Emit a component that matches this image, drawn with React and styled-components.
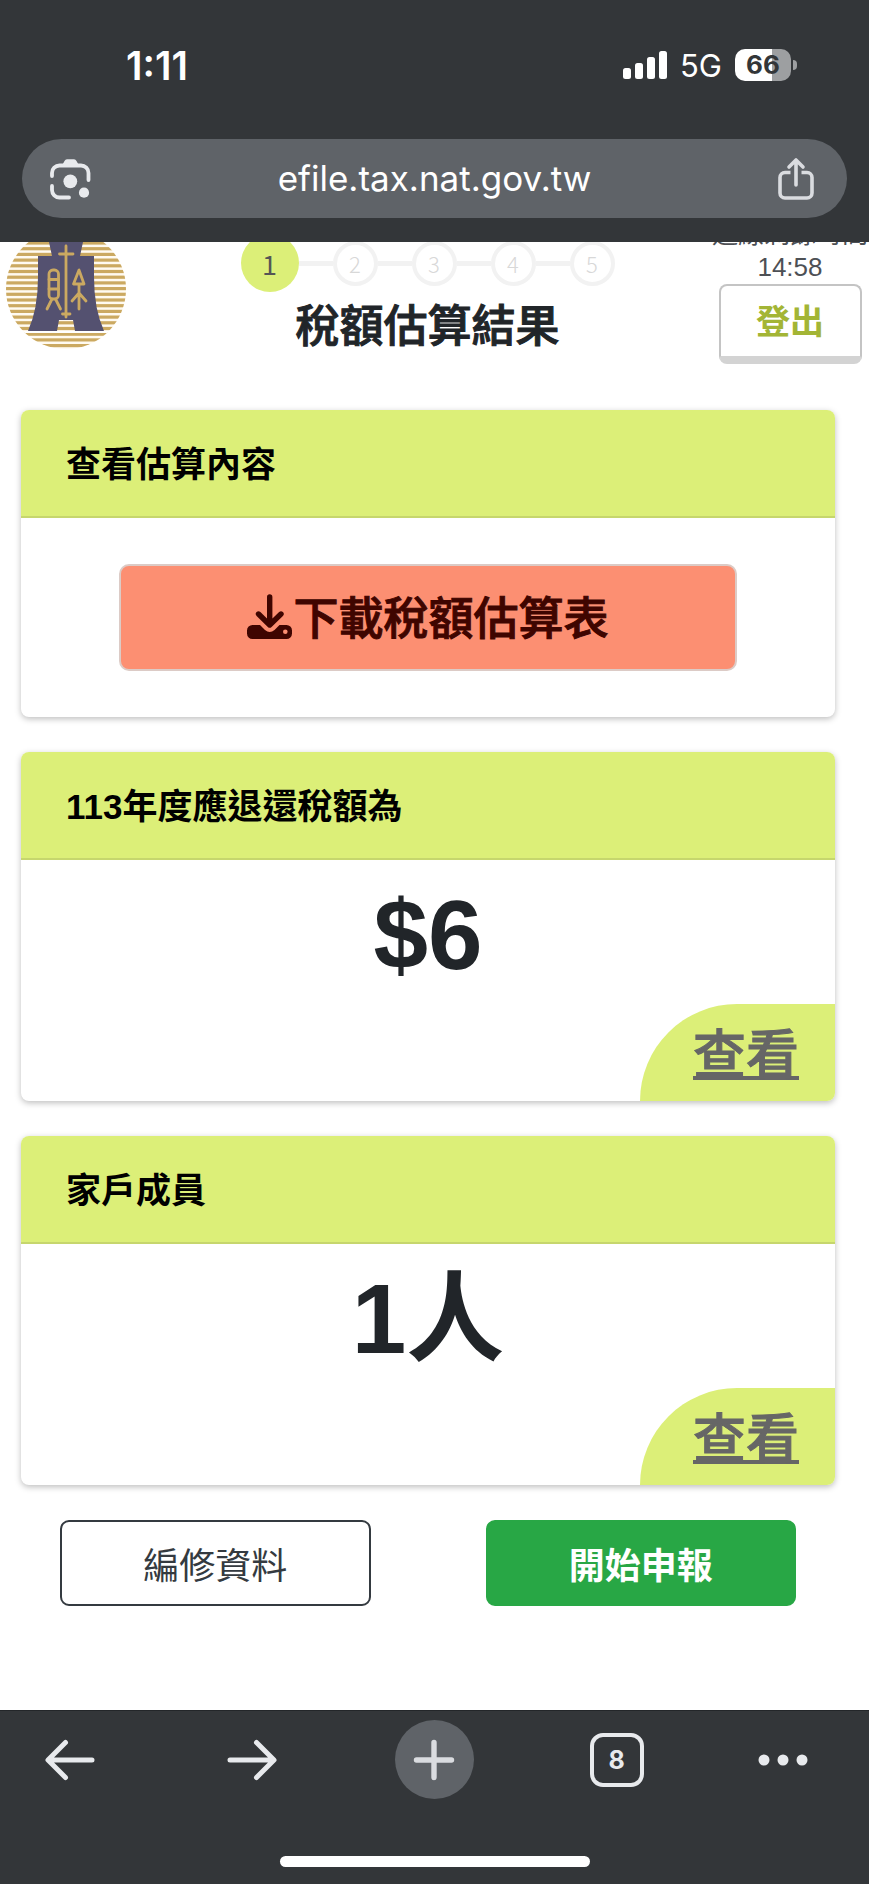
import React from "react";
import styled, { createGlobalStyle } from "styled-components";

const GlobalStyle = createGlobalStyle`
  *, *::before, *::after { box-sizing: border-box; }
  body {
    margin: 0;
    color: #212529;
    background: #fff;
    font-family: "Liberation Sans", "Noto Sans CJK TC", sans-serif;
  }
  button, input { font-family: inherit; }
`;

const Screen = styled.div`
  display: flex;
  flex-direction: column;
  min-height: 100vh;
`;

/* ---------- top browser chrome ---------- */

const TopChrome = styled.div`
  background: #333639;
  padding: 41px 22px 24px;
  font-family: Inter, sans-serif;
`;

const StatusBar = styled.div`
  display: flex;
  align-items: center;
  justify-content: space-between;
  height: 48px;
  margin-bottom: 50px;
  padding: 0 50px 0 104px;
  color: #fff;
`;

const Clock = styled.time`
  font-size: 39px;
  font-weight: 600;
`;

const StatusIcons = styled.div`
  display: flex;
  align-items: center;
  gap: 13px;
`;

const Network = styled.span`
  font-size: 31px;
`;

const BatteryWrapper = styled.div`
  display: flex;
  align-items: center;
  gap: 2px;
`;

const Battery = styled.div`
  width: 56px;
  height: 32px;
  border-radius: 10px;
  background: linear-gradient(to right, #fff ${(props) => props.$level}%, #9d9fa1 ${(props) => props.$level}%);
  color: #333639;
  font-size: 26px;
  font-weight: 700;
  line-height: 32px;
  text-align: center;
`;

const BatteryTip = styled.div`
  width: 4px;
  height: 10px;
  border-radius: 0 4px 4px 0;
  background: #9d9fa1;
`;

const AddressBar = styled.div`
  display: flex;
  align-items: center;
  height: 79px;
  padding: 0 33px 0 28px;
  border-radius: 40px;
  background: #5f6368;
`;

const Address = styled.input`
  flex: 1;
  min-width: 0;
  border: 0;
  padding: 0 0 2px;
  background: transparent;
  color: #fff;
  font-size: 35px;
  line-height: 44px;
  text-align: center;
  outline: none;
`;

const IconButton = styled.button`
  display: flex;
  align-items: center;
  justify-content: center;
  border: 0;
  padding: 0;
  background: transparent;
  color: #e8eaed;
`;

/* ---------- web page ---------- */

const Viewport = styled.main`
  flex: 1;
  overflow: hidden;
`;

/* the page is scrolled a little, so the header slides under the address bar */
const PageHeader = styled.header`
  display: grid;
  grid-template-columns: 144px 1fr 158px;
  margin-top: -28px;
`;

const LogoLink = styled.a`
  padding: 15px 6px 0;
`;

const HeaderCenter = styled.div`
  display: flex;
  flex-direction: column;
  align-items: center;
  padding-top: 20px;
`;

const Steps = styled.ol`
  display: flex;
  align-items: center;
  margin: 0;
  padding: 0;
  list-style: none;
`;

const Step = styled.li`
  display: flex;
  align-items: center;

  &:not(:first-child)::before {
    content: "";
    width: 34px;
    height: 5px;
    background: #f2f2f2;
  }
`;

const StepCircle = styled.span`
  display: flex;
  align-items: center;
  justify-content: center;
  width: ${(props) => (props.$active ? 58 : 45)}px;
  height: ${(props) => (props.$active ? 58 : 45)}px;
  border: ${(props) => (props.$active ? "0" : "4px solid #f2f2f2")};
  border-radius: 50%;
  background: ${(props) => (props.$active ? "#dcef78" : "#fff")};
  color: ${(props) => (props.$active ? "#555" : "#d8d8d8")};
  font-family: "Noto Sans CJK TC", sans-serif;
  font-size: ${(props) => (props.$active ? 27 : 22)}px;
  font-weight: ${(props) => (props.$active ? 400 : 300)};
  line-height: 1;
`;

const Title = styled.h1`
  margin: 9px 0 0;
  font-size: 44px;
  font-weight: 500;
  line-height: 52px;
  -webkit-text-stroke: 1px #212529;
`;

const Session = styled.div`
  display: flex;
  flex-direction: column;
  align-items: center;
  padding-top: 4px;
  color: #4d5055;
  font-size: 26px;
  line-height: 33px;
  white-space: nowrap;
`;

const LogoutButton = styled.button`
  width: 143px;
  height: 80px;
  border: 2px solid #c4c4c4;
  border-bottom: 8px solid #d3d3d3;
  border-radius: 8px;
  padding: 0 0 4px;
  background: #fff;
  color: #a3b535;
  font-size: 34px;
  font-weight: 700;
`;

const Content = styled.div`
  display: flex;
  flex-direction: column;
  gap: 35px;
  padding: 46px 34px 103px 21px;
`;

const CardWrapper = styled.section`
  overflow: hidden;
  border-radius: 8px;
  background: #fff;
  box-shadow: 0 2px 6px rgba(0, 0, 0, 0.26);
`;

const CardHeader = styled.h2`
  margin: 0;
  padding: 29px 45px 25px;
  border-bottom: 2px solid #c6d66d;
  background: #dcef78;
  color: #000;
  font-size: 35px;
  font-weight: 700;
  line-height: 52px;
`;

const DownloadArea = styled.div`
  padding: 46px 12%;
`;

const DownloadButton = styled.button`
  display: flex;
  align-items: center;
  justify-content: center;
  width: 100%;
  height: 107px;
  border: 2px solid #dccbc6;
  border-radius: 10px;
  padding: 0 0 4px;
  background: #fc8f72;
  color: #3f0500;
  font-size: 45px;
  font-weight: 500;
  -webkit-text-stroke: 1px #3f0500;
`;

const SummaryBody = styled.div`
  display: flex;
  flex-direction: column;
`;

const Amount = styled.p`
  margin: 0;
  padding: 19px 0 13px;
  font-size: 98px;
  font-weight: 700;
  line-height: 112px;
  text-align: center;
`;

const ViewLink = styled.a`
  align-self: flex-end;
  width: 24%;
  height: 97px;
  padding-right: 36px;
  border-radius: 97px 0 0 0;
  background: #dcef78;
  color: #666;
  font-size: 53px;
  font-weight: 500;
  line-height: 104px;
  -webkit-text-stroke: 1px #666;
  text-align: right;
  white-space: nowrap;
  text-decoration-thickness: 4px;
  text-underline-offset: 2px;
  text-decoration-skip-ink: none;
`;

const Actions = styled.div`
  display: flex;
  gap: 115px;
  padding: 0 39px;
`;

const ActionButton = styled.button`
  flex: 1;
  height: 86px;
  border: 2px solid ${(props) => (props.$primary ? "#28a745" : "#343a40")};
  border-radius: 9px;
  padding: 0;
  background: ${(props) => (props.$primary ? "#28a745" : "#fff")};
  color: ${(props) => (props.$primary ? "#fff" : "#343a40")};
  font-size: 36px;
  font-weight: ${(props) => (props.$primary ? 700 : 400)};
`;

/* ---------- bottom browser chrome ---------- */

const BottomChrome = styled.div`
  display: flex;
  flex-direction: column;
  align-items: center;
  padding: 9px 0 17px;
  border-top: 1px solid #232629;
  background: #333639;
  font-family: Inter, sans-serif;
`;

const Toolbar = styled.nav`
  display: grid;
  grid-template-columns: 140fr 224fr 140fr 224fr 140fr;
  align-items: center;
  justify-items: center;
  width: 100%;
  margin-bottom: 57px;
`;

const NewTabButton = styled(IconButton)`
  width: 79px;
  height: 79px;
  border-radius: 50%;
  background: #5f6368;
`;

const TabsButton = styled(IconButton)`
  width: 54px;
  height: 54px;
  border: 4px solid #e8eaed;
  border-radius: 13px;
  font-size: 25px;
  font-weight: 700;
`;

const MenuButton = styled(IconButton)`
  margin-right: 32px;
`;

const HomeIndicator = styled.div`
  width: 310px;
  height: 11px;
  border-radius: 6px;
  background: #fff;
`;

/* ---------- icons ---------- */

const SignalIcon = () => (
  <svg width="44" height="28" viewBox="0 0 44 28" fill="currentColor" aria-hidden="true">
    <rect x="0" y="17" width="8" height="11" rx="2.5" />
    <rect x="12" y="12" width="8" height="16" rx="2.5" />
    <rect x="24" y="6" width="8" height="22" rx="2.5" />
    <rect x="36" y="0" width="8" height="28" rx="2.5" />
  </svg>
);

const LensIcon = () => (
  <svg width="41" height="42" viewBox="0 0 41 42" fill="none" stroke="currentColor" strokeWidth="3.8" strokeLinecap="round" aria-hidden="true">
    <path d="M2 18V15a7.500 7.500 0 0 1 7.500-7.500H31a7.500 7.500 0 0 1 7.500 7.500v7" />
    <path d="M2 28v4a7.500 7.500 0 0 0 7.500 7.500h9.500" />
    <path d="M12 7.500 14.500 3Q15.300 1.200 17 1.200h7Q25.700 1.200 26.500 3L29 7.500Z" fill="currentColor" stroke="none" />
    <circle cx="20.300" cy="23.300" r="6.900" fill="currentColor" stroke="none" />
    <circle cx="34" cy="34.700" r="5.100" fill="currentColor" stroke="none" />
  </svg>
);

const ShareIcon = () => (
  <svg width="36" height="44" viewBox="0 0 36 44" fill="none" stroke="#dadce0" strokeWidth="3.600" aria-hidden="true">
    <path d="M12.500 15.500H7a5 5 0 0 0-5 5V36a5 5 0 0 0 5 5h22a5 5 0 0 0 5-5V20.500a5 5 0 0 0-5-5h-5.500" />
    <path d="M18 28V3M11 10l7-7 7 7" strokeLinecap="round" strokeLinejoin="round" />
  </svg>
);

const stripes = Array(22).fill(1);

const Logo = () => (
  <svg width="120" height="120" viewBox="0 0 120 120" role="img" aria-label="財政部">
    <defs>
      <clipPath id="disc">
        <circle cx="60" cy="60" r="60" />
      </clipPath>
    </defs>
    <g clipPath="url(#disc)">
      <rect width="120" height="120" fill="#fffaf0" />
      {stripes.map((_, i) => (
        <rect key={i} x="0" y={1 + i * 5.7} width="120" height="3.2" fill="#cba961" />
      ))}
      <rect x="0" y="102" width="120" height="2" fill="#fff" />
    </g>
    <path
      d="M42 6 43 13 46 27H32V48Q32 80 22 102H51L53 91H67L69 102H98Q88 80 88 48V27H74L77 13 78 6Z"
      fill="#545170"
    />
    <g fill="none" stroke="#cba961" strokeWidth="2.800" strokeLinecap="round" strokeLinejoin="round">
      <path d="M60 17V88M53.500 25H67M56.500 85H64" />
      <rect x="43" y="41" width="9.500" height="29" rx="4" />
      <path d="M43 50.500h9.500M43 60h9.500M46 70l-5 10M49.500 70l5 10" />
      <path d="M73 41 67.500 55H78ZM73 55V80M73 64l-7 8M73 64l7 8" />
    </g>
  </svg>
);

const DownloadIcon = () => (
  <svg width="46" height="46" viewBox="0 0 46 46" aria-hidden="true">
    <path d="M0 37.500A5.500 5.500 0 0 1 5.500 32H13l5 5q4.700 4 9.500 0l5-5h7a5.500 5.500 0 0 1 5.500 5.500v3a5.500 5.500 0 0 1-5.500 5.500h-34A5.500 5.500 0 0 1 0 40.500Z" fill="#3f0500" />
    <path d="M22.700 4V31M11.500 21l11.200 11L34 21" fill="none" stroke="#3f0500" strokeWidth="5.400" strokeLinecap="round" strokeLinejoin="round" />
    <circle cx="38.300" cy="38.700" r="2.300" fill="#fc8f72" />
  </svg>
);

const ArrowIcon = ({ forward }) => (
  <svg width="50" height="42" viewBox="0 0 50 42" fill="none" stroke="currentColor" strokeWidth="5" strokeLinecap="round" strokeLinejoin="round" aria-hidden="true">
    {forward ? <path d="M3 21H46M29.500 3.500 47 21 29.500 38.500" /> : <path d="M47 21H4M20.500 3.500 3 21 20.500 38.500" />}
  </svg>
);

const PlusIcon = () => (
  <svg width="42" height="42" viewBox="0 0 42 42" stroke="#dadce0" strokeWidth="5.400" strokeLinecap="round" aria-hidden="true">
    <path d="M21 3.500V38.500M3.500 21H38.500" />
  </svg>
);

const DotsIcon = () => (
  <svg width="50" height="12" viewBox="0 0 50 12" fill="currentColor" aria-hidden="true">
    <circle cx="6" cy="6" r="5.500" />
    <circle cx="25" cy="6" r="5.500" />
    <circle cx="44" cy="6" r="5.500" />
  </svg>
);

const Card = ({ title, children }) => (
  <CardWrapper>
    <CardHeader>{title}</CardHeader>
    {children}
  </CardWrapper>
);

const SummaryCard = ({ title, value, href }) => (
  <Card title={title}>
    <SummaryBody>
      <Amount>{value}</Amount>
      <ViewLink href={href}>查看</ViewLink>
    </SummaryBody>
  </Card>
);

const App = () => {
  const currentStep = 1;

  return (
    <Screen>
      <GlobalStyle />
      <TopChrome>
        <StatusBar>
          <Clock>1:11</Clock>
          <StatusIcons>
            <SignalIcon />
            <Network>5G</Network>
            <BatteryWrapper>
              <Battery $level={66}>66</Battery>
              <BatteryTip />
            </BatteryWrapper>
          </StatusIcons>
        </StatusBar>
        <AddressBar>
          <IconButton aria-label="Lens"><LensIcon /></IconButton>
          <Address type="text" aria-label="網址" defaultValue="efile.tax.nat.gov.tw" />
          <IconButton aria-label="分享"><ShareIcon /></IconButton>
        </AddressBar>
      </TopChrome>

      <Viewport>
        <PageHeader>
          <LogoLink href="#home"><Logo /></LogoLink>
          <HeaderCenter>
            <Steps>
              {[1, 2, 3, 4, 5].map((n) => (
                <Step key={n}>
                  <StepCircle $active={n === currentStep}>{n}</StepCircle>
                </Step>
              ))}
            </Steps>
            <Title>稅額估算結果</Title>
          </HeaderCenter>
          <Session>
            <span>連線剩餘時間</span>
            <span>14:58</span>
            <LogoutButton>登出</LogoutButton>
          </Session>
        </PageHeader>

        <Content>
          <Card title="查看估算內容">
            <DownloadArea>
              <DownloadButton>
                <DownloadIcon />
                下載稅額估算表
              </DownloadButton>
            </DownloadArea>
          </Card>
          <SummaryCard title="113年度應退還稅額為" value="$6" href="#refund" />
          <SummaryCard title="家戶成員" value="1人" href="#members" />
          <Actions>
            <ActionButton>編修資料</ActionButton>
            <ActionButton $primary>開始申報</ActionButton>
          </Actions>
        </Content>
      </Viewport>

      <BottomChrome>
        <Toolbar>
          <IconButton aria-label="上一頁"><ArrowIcon /></IconButton>
          <IconButton aria-label="下一頁"><ArrowIcon forward /></IconButton>
          <NewTabButton aria-label="新分頁"><PlusIcon /></NewTabButton>
          <TabsButton>8</TabsButton>
          <MenuButton aria-label="選單"><DotsIcon /></MenuButton>
        </Toolbar>
        <HomeIndicator />
      </BottomChrome>
    </Screen>
  );
};

export default App;
